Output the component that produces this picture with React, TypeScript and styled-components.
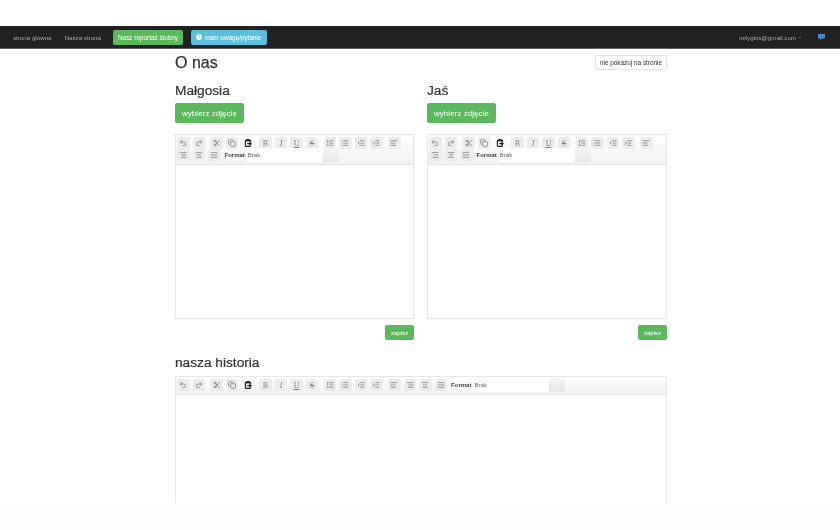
import React from "react";
import styled, { createGlobalStyle } from "styled-components";
import {
  Undo2, Redo2, Scissors, Copy, ClipboardPaste, ListOrdered, List, Outdent, Indent,
  AlignLeft, AlignRight, AlignCenter, AlignJustify,
} from "lucide-react";

const Global = createGlobalStyle`
  html, body { margin: 0; padding: 0; background: #fdfdfd; }
  body { font-family: "Liberation Sans", Arial, sans-serif; color: #333; }
`;

const Page = styled.div`
  height: 503px;
  background: #fff;
  overflow: hidden;
  padding-top: 26px;
  box-sizing: border-box;
  filter: blur(0.35px);
`;

const Nav = styled.nav`
  height: 23px;
  background: #222;
  border-bottom: 1px solid #666;
  box-sizing: border-box;
  display: flex;
  align-items: center;
  padding: 0 15px 0 13px;
  font-size: 6.2px;
  color: #a8a8a8;
`;

const NavLink = styled.span`
  margin-right: ${(p: { $mr: number }) => p.$mr}px;
`;

const NavButton = styled.span<{ $bg: string; $w: number; $mr: number }>`
  display: flex;
  align-items: center;
  justify-content: center;
  gap: 2px;
  width: ${(p) => p.$w}px;
  height: 15px;
  margin-right: ${(p) => p.$mr}px;
  border-radius: 2px;
  background: ${(p) => p.$bg};
  color: #fff;
  font-size: 6.4px;
  font-weight: 400;
`;

const Email = styled.span`
  margin-left: auto;
  margin-right: 17px;
  display: flex;
  align-items: center;
  gap: 3px;
`;

const Caret = styled.i`
  width: 0;
  height: 0;
  border-left: 1.5px solid transparent;
  border-right: 1.5px solid transparent;
  border-top: 1.5px solid #a8a8a8;
`;

const Container = styled.main`
  width: 492px;
  margin-left: 175px;
`;

const TitleRow = styled.div`
  display: flex;
  justify-content: space-between;
  align-items: flex-start;
  padding-top: 4px;
  height: 30px;
`;

const Title = styled.h1`
  margin: 0;
  font-size: 16px;
  line-height: 20px;
  font-weight: 400;
  color: #333;
  -webkit-text-stroke: 0.25px #333;
`;

const HideButton = styled.span`
  display: flex;
  align-items: center;
  justify-content: center;
  width: 72px;
  height: 15px;
  margin-top: 2px;
  box-sizing: border-box;
  border: 1px solid #e4e4e4;
  border-radius: 2px;
  font-size: 6.4px;
  color: #333;
  background: #fff;
`;

const Columns = styled.div`
  display: grid;
  grid-template-columns: 239px 240px;
  column-gap: 13px;
`;

const Column = styled.section`
  display: flex;
  flex-direction: column;
  align-items: flex-start;
`;

const SubTitle = styled.h2`
  margin: 0;
  font-size: 13.7px;
  line-height: 16px;
  font-weight: 400;
  color: #333;
  -webkit-text-stroke: 0.2px #333;
`;

const PickButton = styled.span`
  display: flex;
  align-items: center;
  justify-content: center;
  width: 69px;
  height: 20px;
  margin: 4px 0 11px;
  background: #5cb85c;
  border-radius: 2px;
  color: #fff;
  font-size: 7.9px;
  letter-spacing: 0.1px;
`;

const SaveButton = styled.span`
  display: flex;
  align-items: center;
  justify-content: center;
  align-self: flex-end;
  width: 29px;
  height: 15px;
  margin-top: 6px;
  background: #5cb85c;
  border-radius: 2px;
  color: #fff;
  font-size: 6.2px;
`;

const Editor = styled.div<{ $h: number }>`
  width: 100%;
  height: ${(p) => p.$h}px;
  box-sizing: border-box;
  border: 1px solid #e6e6e6;
  display: flex;
  flex-direction: column;
`;

const Toolbar = styled.div`
  display: flex;
  flex-wrap: wrap;
  align-items: center;
  padding: 2px 0 3px 1px;
  background: linear-gradient(#fff, #f1f1f1);
  border-bottom: 1px solid #e6e6e6;
`;

const ToolButton = styled.span<{ $group?: boolean; $active?: boolean }>`
  display: flex;
  align-items: center;
  justify-content: center;
  width: 12.5px;
  height: 12px;
  margin: 0 3px 0 ${(p) => (p.$group ? 2.4 : 0)}px;
  border-radius: 2px;
  background: ${(p) => (p.$active ? "#fafafa" : "#ececec")};
  color: ${(p) => (p.$active ? "#222" : "#808080")};
  font-family: "Liberation Serif", serif;
  font-size: 8px;
`;

const FormatLabel = styled.span`
  font-size: 6px;
  font-weight: 700;
  color: #444;
  margin: 0 1px 0 1px;
`;

const Combo = styled.span`
  display: flex;
  width: 93px;
  height: 14px;
  margin: -1px 0;
  border-radius: 2px;
  background: #fff;
  font-size: 6px;
  color: #666;
`;

const ComboText = styled.span`
  flex: 1;
  padding: 3.5px 0 0 2px;
`;

const ComboArrow = styled.span`
  width: 16px;
  background: linear-gradient(#f5f5f5, #e6e6e6);
  border-radius: 0 2px 2px 0;
`;

const EditArea = styled.div`
  flex: 1;
  background: #fff;
`;

const HistoryTitle = styled(SubTitle)`
  margin: 15px 0 5px;
  height: 16px;
`;

type Item = { icon?: React.ElementType; text?: string; group?: boolean; active?: boolean };

const items: Item[] = [
  { icon: Undo2 }, { icon: Redo2 },
  { icon: Scissors, group: true }, { icon: Copy }, { icon: ClipboardPaste, active: true },
  { text: "B", group: true }, { text: "I" }, { text: "U" }, { text: "S" },
  { icon: ListOrdered, group: true }, { icon: List }, { icon: Outdent }, { icon: Indent },
  { icon: AlignLeft, group: true }, { icon: AlignRight }, { icon: AlignCenter }, { icon: AlignJustify },
];

const StyledLetter = styled.span<{ $kind: string }>`
  font-style: ${(p) => (p.$kind === "I" ? "italic" : "normal")};
  text-decoration: ${(p) => (p.$kind === "U" ? "underline" : p.$kind === "S" ? "line-through" : "none")};
  font-weight: 400;
`;

const EditorBox = ({ height }: { height: number }) => (
  <Editor $h={height}>
    <Toolbar>
      {items.map((it, i) => {
        const Icon = it.icon;
        return (
          <ToolButton key={i} $group={it.group} $active={it.active}>
            {Icon ? <Icon size={8} strokeWidth={it.active ? 3.5 : 2.4} /> : <StyledLetter $kind={it.text!}>{it.text}</StyledLetter>}
          </ToolButton>
        );
      })}
      <FormatLabel>Format</FormatLabel>
      <Combo>
        <ComboText>Brak</ComboText>
        <ComboArrow />
      </Combo>
    </Toolbar>
    <EditArea />
  </Editor>
);

const Person = ({ name }: { name: string }) => (
  <Column>
    <SubTitle>{name}</SubTitle>
    <PickButton>wybierz zdjęcie</PickButton>
    <EditorBox height={185} />
    <SaveButton>zapisz</SaveButton>
  </Column>
);

export default function App() {
  return (
    <Page>
      <Global />
      <Nav>
        <NavLink $mr={13}>strona główna</NavLink>
        <NavLink $mr={12}>Nasza strona</NavLink>
        <NavButton $bg="#5cb85c" $w={70} $mr={8}>Nasz reportaż ślubny</NavButton>
        <NavButton $bg="#5bc0de" $w={76} $mr={0}>
          <svg width="6" height="6" viewBox="0 0 12 12" aria-hidden="true">
            <circle cx="6" cy="6" r="6" fill="#fff" />
            <path d="M4 4.6a2 2 0 1 1 3 1.7c-.7.4-1 .7-1 1.4M6 9v1" stroke="#5bc0de" strokeWidth="1.5" fill="none" />
          </svg>
          mam uwagę/pytanie
        </NavButton>
        <Email>milyglos@gmail.com <Caret /></Email>
        <svg width="7" height="6" viewBox="0 0 14 12" aria-hidden="true">
          <path d="M1 0h12a1 1 0 0 1 1 1v7a1 1 0 0 1-1 1H7l-3 3V9H1a1 1 0 0 1-1-1V1a1 1 0 0 1 1-1z" fill="#428bca" />
        </svg>
      </Nav>
      <Container>
        <TitleRow>
          <Title>O nas</Title>
          <HideButton>nie pokazuj na stronie</HideButton>
        </TitleRow>
        <Columns>
          <Person name="Małgosia" />
          <Person name="Jaś" />
        </Columns>
        <HistoryTitle>nasza historia</HistoryTitle>
        <EditorBox height={200} />
      </Container>
    </Page>
  );
}
